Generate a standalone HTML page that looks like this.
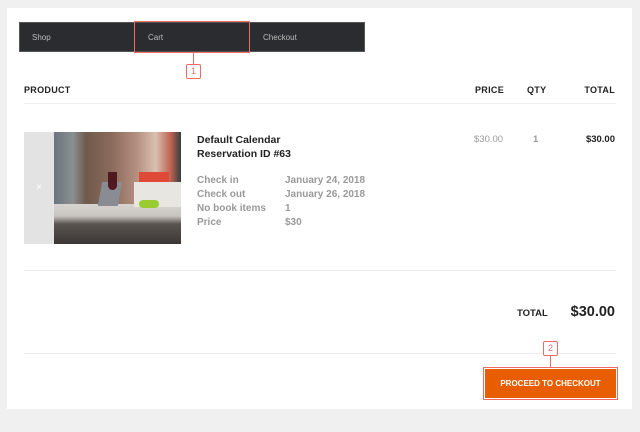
<!DOCTYPE html>
<html><head><meta charset="utf-8"><style>
*{margin:0;padding:0;box-sizing:border-box}
body{width:640px;height:432px;background:#f0f0f0;font-family:"Liberation Sans",sans-serif;position:relative;overflow:hidden}
.card{position:absolute;left:7px;top:8px;width:625px;height:401px;background:#fff}
.a{position:absolute}
.nav{left:19px;top:22px;width:346px;height:30px;background:#2b2c30;border:1px solid #555}
.nav span{position:absolute;top:10px;font-size:8px;color:#bbb}
.hl{left:134px;top:21px;width:116px;height:32px;border:1px solid #f06a63}
.badge{border:1px solid #f06a63;border-radius:2px;background:#fff;color:#f06a63;font-size:9px;text-align:center;line-height:13px;width:15px;height:15px}
.vl{width:1px;background:#f06a63}
.th{top:85px;font-size:9px;font-weight:bold;color:#222;letter-spacing:.3px}
.line{left:24px;width:592px;height:1px;background:#eee}
.g{font-size:10px;font-weight:bold;color:#999}
</style></head><body>
<div class="card"></div>
<div class="a nav"><span style="left:12px">Shop</span><span style="left:128px">Cart</span><span style="left:243px">Checkout</span></div>
<div class="a hl"></div>
<div class="a vl" style="left:193px;top:53px;height:11px"></div>
<div class="a badge" style="left:186px;top:64px">1</div>
<div class="a th" style="left:24px">PRODUCT</div>
<div class="a th" style="left:475px">PRICE</div>
<div class="a th" style="left:527px">QTY</div>
<div class="a th" style="right:25px">TOTAL</div>
<div class="a line" style="top:103px"></div>
<div class="a" style="left:24px;top:132px;width:30px;height:112px;background:#e3e3e3;color:#fff;font-size:10px;text-align:center;line-height:112px">×</div>
<div class="a" style="left:54px;top:132px;width:127px;height:112px;overflow:hidden;background:linear-gradient(90deg,#6a7480 0%,#8a8f90 15%,#6e5a4c 25%,#8a6a5a 45%,#b48f80 65%,#d8c0b0 80%,#c06050 92%,#304040 100%)">
<div class="a" style="left:0;top:72px;width:127px;height:40px;background:linear-gradient(180deg,#d8d4d0 0%,#c8c4c0 30%,#5a5450 50%,#3a3634 100%)"></div>
<div class="a" style="left:85px;top:40px;width:30px;height:12px;background:#e04838"></div>
<div class="a" style="left:80px;top:50px;width:47px;height:25px;background:#e8e6e0"></div>
<div class="a" style="left:46px;top:50px;width:20px;height:24px;background:#8a8c94;transform:skewX(-10deg)"></div>
<div class="a" style="left:54px;top:40px;width:9px;height:18px;border-radius:0 0 5px 5px;background:#501820"></div>
<div class="a" style="left:85px;top:68px;width:20px;height:8px;background:#9c3;border-radius:4px"></div>
</div>
<div class="a" style="left:197px;top:133px;font-size:10.5px;font-weight:bold;color:#222;line-height:14px">Default Calendar<br>Reservation ID #63</div>
<div class="a g" style="left:197px;top:174px;line-height:14px">Check in<br>Check out<br>No book items<br>Price</div>
<div class="a g" style="left:285px;top:174px;line-height:14px">January 24, 2018<br>January 26, 2018<br>1<br>$30</div>
<div class="a" style="left:474px;top:134px;font-size:9.5px;color:#999">$30.00</div>
<div class="a g" style="left:533px;top:134px;font-size:9.5px">1</div>
<div class="a" style="right:25px;top:134px;font-size:9.5px;font-weight:bold;color:#222">$30.00</div>
<div class="a line" style="top:270px"></div>
<div class="a" style="left:517px;top:308px;font-size:9.5px;font-weight:bold;color:#222">TOTAL</div>
<div class="a" style="right:25px;top:304px;font-size:14.5px;font-weight:bold;color:#222">$30.00</div>
<div class="a line" style="top:353px"></div>
<div class="a badge" style="left:543px;top:341px">2</div>
<div class="a vl" style="left:550px;top:356px;height:11px"></div>
<div class="a" style="left:483px;top:367px;width:135px;height:33px;border:1px solid #f06a63;padding:1px"><div style="width:100%;height:100%;background:#e85d00;color:#fff;font-size:8px;font-weight:bold;text-align:center;line-height:29px">PROCEED TO CHECKOUT</div></div>
</body></html>
